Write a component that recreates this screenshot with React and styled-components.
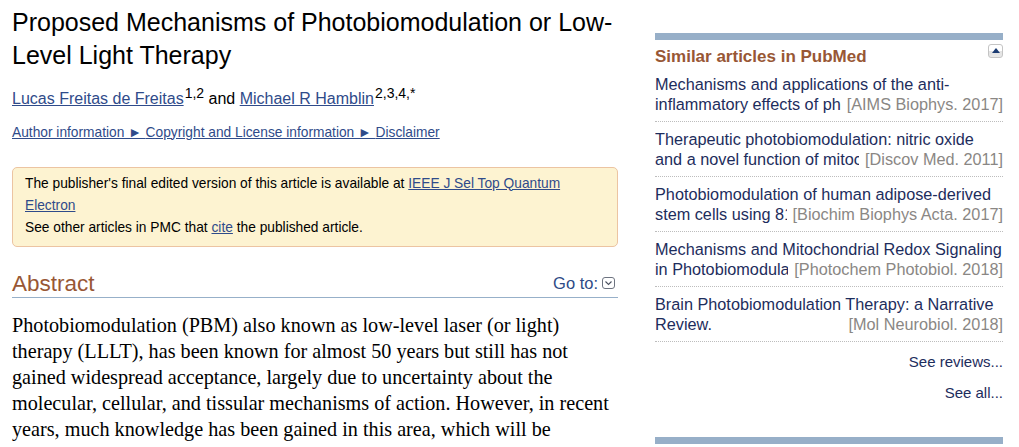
import styled, { createGlobalStyle } from 'styled-components';

const GlobalStyle = createGlobalStyle`
  html, body {
    margin: 0;
    padding: 0;
    background: #fff;
  }
  body {
    font-family: "Liberation Sans", Arial, sans-serif;
    color: #000;
  }
`;

const Page = styled.div`
  display: flex;
  align-items: flex-start;
  gap: 37px;
  padding: 0 16px 0 12px;
  width: 1019px;
  box-sizing: border-box;
`;

const Main = styled.main`
  width: 606px;
  flex: none;
  padding-top: 6px;
`;

const Title = styled.h1`
  margin: 0;
  font-size: 25px;
  line-height: 33px;
  font-weight: normal;
`;

const Authors = styled.div`
  margin-top: 16.5px;
  font-size: 16px;
  line-height: 20px;
`;

const Link = styled.a`
  color: #2f4b8a;
  text-decoration: underline;
  cursor: pointer;
`;

const Sup = styled.sup`
  font-size: 14px;
  line-height: 0;
  vertical-align: 6px;
  margin-left: 1px;
`;

const InfoLinks = styled.div`
  margin-top: 15px;
  font-size: 13.75px;
  line-height: 18px;
`;

const Notice = styled.div`
  margin-top: 25px;
  padding: 5px 12px 7px;
  background: #fdf3d1;
  border: 1px solid #ecc4a2;
  border-radius: 5px;
  font-size: 13.75px;
  line-height: 22px;
`;

const SectionHead = styled.div`
  margin-top: 24px;
  display: flex;
  align-items: baseline;
  justify-content: space-between;
  border-bottom: 1px solid #97b0c9;
`;

const SectionTitle = styled.h2`
  margin: 0;
  font-size: 22.5px;
  line-height: 26px;
  font-weight: normal;
  color: #985735;
`;

const GoTo = styled.span`
  display: inline-flex;
  align-items: center;
  gap: 4px;
  font-size: 16.5px;
  color: #2e4a86;
  margin-right: 3px;
  position: relative;
  top: -2px;
`;

const Body = styled.p`
  margin: 14px 0 0;
  font-family: "Liberation Serif", "Times New Roman", serif;
  font-size: 20.2px;
  line-height: 26px;
`;

const Side = styled.aside`
  width: 348px;
  flex: none;
  margin-top: 33px;
`;

const Bar = styled.div`
  height: 7px;
  background: #97afc8;
`;

const SideHead = styled.div`
  display: flex;
  justify-content: space-between;
  align-items: flex-start;
  margin-top: 7px;
`;

const SideTitle = styled.h3`
  margin: 0;
  font-size: 17px;
  line-height: 20px;
  font-weight: bold;
  color: #985735;
`;

const Toggle = styled.button`
  width: 15px;
  height: 14px;
  margin-top: -3px;
  padding: 0;
  border: 1px solid #c4c4c4;
  border-radius: 3px;
  background: linear-gradient(#fff 0%, #fff 50%, #e2e2e2 51%, #e8e8e8 100%);
  display: flex;
  align-items: center;
  justify-content: center;

  &::before {
    content: "";
    border-left: 4px solid transparent;
    border-right: 4px solid transparent;
    border-bottom: 5px solid #1b3b72;
    margin-top: -2px;
  }
`;

const List = styled.ul`
  list-style: none;
  margin: -0.5px 0 0;
  padding: 0;
`;

const Item = styled.li`
  position: relative;
  padding: 7px 0 6px;
  border-bottom: 1px dotted #bdbdbd;
`;

const ItemTitle = styled.a`
  display: block;
  max-height: 41px;
  overflow: hidden;
  font-size: 16.25px;
  line-height: 20.5px;
  color: #1d2d5c;
  text-decoration: none;
`;

const Source = styled.span`
  position: absolute;
  right: 0;
  bottom: 6px;
  padding-left: 6px;
  background: #fff;
  font-size: 16.25px;
  line-height: 20.5px;
  color: #8a8784;
`;

const More = styled.a`
  display: block;
  text-align: right;
  font-size: 15px;
  line-height: 18px;
  color: #1d2d5c;
  margin-top: ${p => p.$gap}px;
`;

const BottomBar = styled(Bar)`
  margin-top: 35px;
`;

const articles = [
  {
    title: 'Mechanisms and applications of the anti-inflammatory effects of photobiomodulation.',
    source: '[AIMS Biophys. 2017]',
  },
  {
    title: 'Therapeutic photobiomodulation: nitric oxide and a novel function of mitochondrial cytochrome c oxidase.',
    source: '[Discov Med. 2011]',
  },
  {
    title: 'Photobiomodulation of human adipose-derived stem cells using 810nm and 980nm lasers operates via different mechanisms of action.',
    source: '[Biochim Biophys Acta. 2017]',
  },
  {
    title: 'Mechanisms and Mitochondrial Redox Signaling in Photobiomodulation.',
    source: '[Photochem Photobiol. 2018]',
  },
  {
    title: 'Brain Photobiomodulation Therapy: a Narrative Review.',
    source: '[Mol Neurobiol. 2018]',
  },
];

function GoToIcon() {
  return (
    <svg width="13" height="12" viewBox="0 0 13 12">
      <rect x="0.5" y="0.5" width="12" height="11" rx="2.5" fill="#fff" stroke="#6d7380" />
      <path d="M3.5 4.5 L6.5 7.5 L9.5 4.5" fill="none" stroke="#4b5160" strokeWidth="1.1" />
    </svg>
  );
}

export default function App() {
  return (
    <>
      <GlobalStyle />
      <Page>
        <Main>
          <Title>Proposed Mechanisms of Photobiomodulation or Low-Level Light Therapy</Title>
          <Authors>
            <Link>Lucas Freitas de Freitas</Link><Sup>1,2</Sup> and{' '}
            <Link>Michael R Hamblin</Link><Sup>2,3,4,*</Sup>
          </Authors>
          <InfoLinks>
            <Link>Author information ► </Link>
            <Link>Copyright and License information ► </Link>
            <Link>Disclaimer</Link>
          </InfoLinks>
          <Notice>
            The publisher's final edited version of this article is available at{' '}
            <Link>IEEE J Sel Top Quantum Electron</Link>
            <br />
            See other articles in PMC that <Link>cite</Link> the published article.
          </Notice>
          <SectionHead>
            <SectionTitle>Abstract</SectionTitle>
            <GoTo>Go to: <GoToIcon /></GoTo>
          </SectionHead>
          <Body>
            Photobiomodulation (PBM) also known as low-level laser (or light) therapy (LLLT), has
            been known for almost 50 years but still has not gained widespread acceptance, largely
            due to uncertainty about the molecular, cellular, and tissular mechanisms of action.
            However, in recent years, much knowledge has been gained in this area, which will be
            summarized in this review.
          </Body>
        </Main>
        <Side>
          <Bar />
          <SideHead>
            <SideTitle>Similar articles in PubMed</SideTitle>
            <Toggle aria-label="collapse" />
          </SideHead>
          <List>
            {articles.map(a => (
              <Item key={a.source}>
                <ItemTitle>{a.title}</ItemTitle>
                <Source>{a.source}</Source>
              </Item>
            ))}
          </List>
          <More $gap={11.5}>See reviews...</More>
          <More $gap={13}>See all...</More>
          <BottomBar />
        </Side>
      </Page>
    </>
  );
}
